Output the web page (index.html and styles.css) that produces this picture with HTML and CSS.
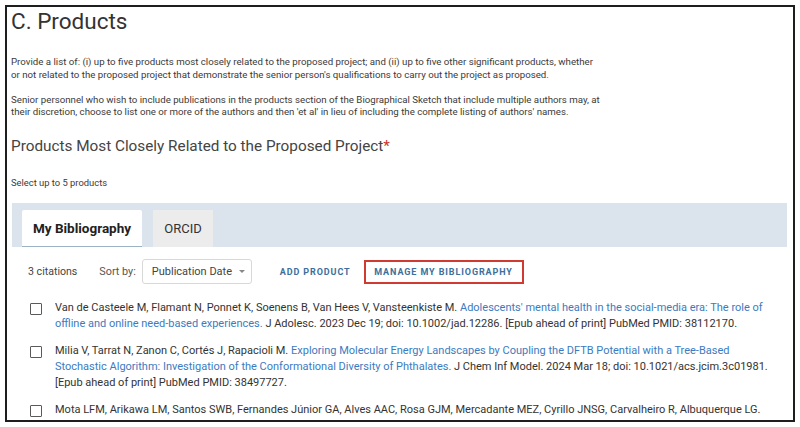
FILE: index.html
```html
<!DOCTYPE html>
<html lang="en">
<head>
<meta charset="utf-8">
<title>C. Products</title>
<link rel="stylesheet" href="styles.css">
</head>
<body>
<div class="frame">
  <h1 class="title">C. Products</h1>
  <p class="desc">Provide a list of: (i) up to five products most closely related to the proposed project; and (ii) up to five other significant products, whether or not related to the proposed project that demonstrate the senior person's qualifications to carry out the project as proposed.</p>
  <p class="desc">Senior personnel who wish to include publications in the products section of the Biographical Sketch that include multiple authors may, at their discretion, choose to list one or more of the authors and then 'et al' in lieu of including the complete listing of authors' names.</p>
  <h2 class="subtitle">Products Most Closely Related to the Proposed Project<span class="req">*</span></h2>
  <p class="hint">Select up to 5 products</p>

  <div class="panel">
    <div class="tabs">
      <div class="tab tab-active">My Bibliography</div>
      <div class="tab tab-idle">ORCID</div>
    </div>
    <div class="toolbar">
      <span class="count">3 citations</span>
      <span class="sort-label">Sort by:</span>
      <div class="select"><span>Publication Date</span><span class="caret"></span></div>
      <span class="action">ADD PRODUCT</span>
      <span class="action action-outlined">MANAGE MY BIBLIOGRAPHY</span>
    </div>
    <ul class="citations">
      <li class="citation">
        <span class="checkbox"></span>
        <p class="cite-text">Van de Casteele M, Flamant N, Ponnet K, Soenens B, Van Hees V, Vansteenkiste M. <a class="cite-link">Adolescents' mental health in the social-media era: The role of offline and online need-based experiences.</a> J Adolesc. 2023 Dec 19; doi: 10.1002/jad.12286. [Epub ahead of print] PubMed PMID: 38112170.</p>
      </li>
      <li class="citation">
        <span class="checkbox"></span>
        <p class="cite-text">Milia V, Tarrat N, Zanon C, Cortés J, Rapacioli M. <a class="cite-link">Exploring Molecular Energy Landscapes by Coupling the DFTB Potential with a Tree-Based Stochastic Algorithm: Investigation of the Conformational Diversity of Phthalates.</a> J Chem Inf Model. 2024 Mar 18; doi: 10.1021/acs.jcim.3c01981. [Epub ahead of print] PubMed PMID: 38497727.</p>
      </li>
      <li class="citation">
        <span class="checkbox"></span>
        <p class="cite-text">Mota LFM, Arikawa LM, Santos SWB, Fernandes Júnior GA, Alves AAC, Rosa GJM, Mercadante MEZ, Cyrillo JNSG, Carvalheiro R, Albuquerque LG. <a class="cite-link">Benchmarking machine learning and parametric methods for genomic prediction of feed efficiency-related traits in Nellore cattle.</a> Sci Rep. 2024 Mar 18; PubMed PMID: 38497000.</p>
      </li>
    </ul>
  </div>
</div>
</body>
</html>
```

FILE: styles.css
```css
* { box-sizing: border-box; }

html, body {
  margin: 0;
  padding: 0;
  background: #ffffff;
}

body {
  font-family: Roboto, "Liberation Sans", Arial, sans-serif;
  color: #333333;
}

.frame {
  margin: 5px 0 0 5px;
  width: 790px;
  height: 417px;
  border: 2px solid #1e1e1e;
  padding: 0 0 0 4px;
  overflow: hidden;
  background: #ffffff;
}

.title {
  margin: 0;
  font-size: 22.5px;
  line-height: 28px;
  font-weight: 400;
  color: #333333;
}

.desc {
  margin: 21px 0 0 0;
  width: 591px;
  font-size: 9.7px;
  line-height: 12.5px;
  color: #3a3a3a;
}

.desc + .desc {
  margin-top: 12.5px;
}

.subtitle {
  margin: 17.5px 0 0 0;
  font-size: 15.3px;
  line-height: 20px;
  font-weight: 400;
  color: #444444;
}

.req {
  color: #c8342c;
}

.hint {
  margin: 21px 0 0 0;
  font-size: 9.4px;
  line-height: 12px;
  color: #3a3a3a;
}

.panel {
  margin: 14px 6px 0 1px;
}

.tabs {
  display: flex;
  gap: 11px;
  height: 44px;
  padding: 7px 0 0 10px;
  background: #dbe4ed;
}

.tab {
  display: flex;
  align-items: center;
  justify-content: center;
  height: 37px;
}

.tab-active {
  width: 120px;
  background: #ffffff;
  font-size: 13.5px;
  font-weight: 700;
  color: #222222;
  border-bottom: 1px solid #9eb2c6;
  border-radius: 2px 2px 0 0;
}

.tab-idle {
  width: 60px;
  background: #ececec;
  font-size: 13px;
  color: #333333;
}

.toolbar {
  display: flex;
  align-items: center;
  height: 25px;
  margin-top: 12px;
  padding-left: 16px;
}

.count {
  font-size: 10.6px;
  color: #444444;
  margin-right: 22px;
}

.sort-label {
  font-size: 10.8px;
  color: #555555;
  margin-right: 6px;
}

.select {
  display: flex;
  align-items: center;
  width: 110px;
  height: 25px;
  padding-left: 9px;
  border: 1px solid #d8d8d8;
  border-radius: 3px;
  font-size: 11px;
  color: #444444;
  margin-right: 28px;
}

.caret {
  margin-left: 7px;
  width: 0;
  height: 0;
  border-left: 3px solid transparent;
  border-right: 3px solid transparent;
  border-top: 3.5px solid #888888;
}

.action {
  font-size: 9px;
  font-weight: 700;
  letter-spacing: 0.9px;
  color: #3b6f9c;
}

.action-outlined {
  display: flex;
  align-items: center;
  justify-content: center;
  margin-left: 13px;
  width: 160px;
  height: 24px;
  border: 2px solid #cf3a32;
}

.citations {
  list-style: none;
  margin: 16px 0 0 0;
  padding: 0 0 0 18px;
}

.citation {
  display: flex;
  align-items: flex-start;
  margin-bottom: 11px;
}

.checkbox {
  flex: none;
  width: 12px;
  height: 12px;
  margin-top: 3px;
  margin-right: 13px;
  border: 1.5px solid #5a5a5a;
  border-radius: 1px;
}

.cite-text {
  margin: 0;
  width: 716px;
  font-size: 11px;
  line-height: 16px;
  color: #333333;
}

.cite-link {
  color: #3b7bbf;
}
```
